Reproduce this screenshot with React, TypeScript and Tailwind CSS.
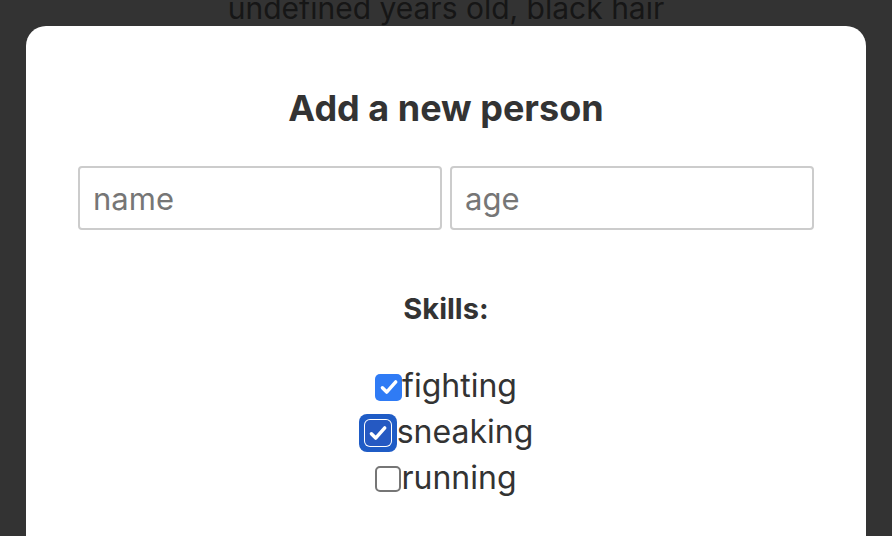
import { useState } from "react";

type Skill = { name: string; checked: boolean; focused?: boolean };

function Tick() {
  return (
    <svg viewBox="0 0 16 16" className="h-[22px] w-[22px]" fill="none">
      <path d="M3.2 8.6l3.1 3.1 6.6-7.4" stroke="#fff" strokeWidth="2.5" strokeLinecap="round" strokeLinejoin="round" />
    </svg>
  );
}

function Check({ checked, focused }: { checked: boolean; focused?: boolean }) {
  if (focused) {
    return (
      <span className="flex h-[38px] w-[38px] items-center justify-center rounded-[8px] bg-[#1f5cc6] p-[3px]">
        <span className="flex items-center justify-center rounded-[6px] bg-white p-[1px]">
          <span className="flex h-[26px] w-[26px] items-center justify-center rounded-[5px] bg-[#2559c2]">
            <Tick />
          </span>
        </span>
      </span>
    );
  }
  if (checked) {
    return (
      <span className="flex h-[27px] w-[27px] items-center justify-center rounded-[5px] bg-[#2f7bf5]">
        <Tick />
      </span>
    );
  }
  return <span className="block h-[26px] w-[26px] rounded-[5px] border-2 border-[#767676] bg-white" />;
}

export default function App() {
  const [skills] = useState<Skill[]>([
    { name: "fighting", checked: true },
    { name: "sneaking", checked: true, focused: true },
    { name: "running", checked: false },
  ]);

  return (
    <div
      className="relative h-[536px] w-full overflow-hidden bg-[#333333] text-[#333333]"
      style={{ fontFamily: "Inter, 'Noto Sans', sans-serif" }}
    >
      <div className="-mt-[12px] text-center text-[30px] leading-[40px] text-[#161616]">
        undefined years old, black hair
      </div>

      <div className="absolute left-[26px] right-[26px] top-[26px] h-[560px] rounded-[20px] bg-white px-[52px] pt-[62px]">
        <h3 className="text-center text-[36px] font-bold leading-[40px]">Add a new person</h3>

        <div className="mt-[38px] flex gap-[8px]">
          <input
            placeholder="name"
            className="h-[64px] min-w-0 flex-1 rounded-[4px] border-2 border-[#cccccc] px-[13px] text-[31px] outline-none placeholder:text-[#767676]"
          />
          <input
            placeholder="age"
            className="h-[64px] min-w-0 flex-1 rounded-[4px] border-2 border-[#cccccc] px-[13px] text-[31px] outline-none placeholder:text-[#767676]"
          />
        </div>

        <h4 className="mt-[61px] text-center text-[29px] font-bold leading-[36px]">Skills:</h4>

        <div className="mt-[36px] flex flex-col items-center">
          {skills.map((s) => (
            <label key={s.name} className="flex h-[46px] items-center text-[32px] leading-[46px]">
              <span className="mt-[2px]">
                <Check checked={s.checked} focused={s.focused} />
              </span>
              <span>{s.name}</span>
            </label>
          ))}
        </div>
      </div>
    </div>
  );
}
